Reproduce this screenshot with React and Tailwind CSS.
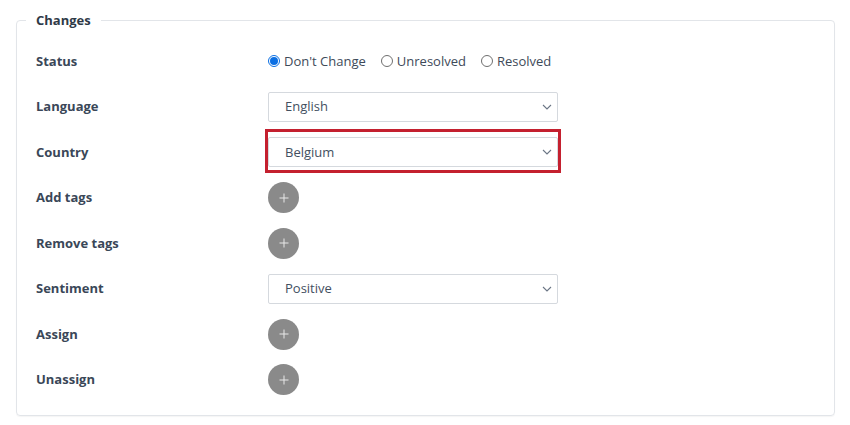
import React from "react";

const font = { fontFamily: '"Open Sans", "Noto Sans", sans-serif' };

function Chevron() {
  return (
    <svg width="10" height="6" viewBox="0 0 10 6" className="absolute right-[5px] top-1/2 -translate-y-1/2">
      <path d="M1 1 L5 5 L9 1" fill="none" stroke="#6b7685" strokeWidth="1.1" />
    </svg>
  );
}

function Select({ value }) {
  return (
    <div className="relative w-[290px] h-[30px] border border-[#d5d9de] rounded-[2px] bg-white flex items-center pl-4 text-[13px] text-[#434f5f]">
      {value}
      <Chevron />
    </div>
  );
}

function PlusBtn() {
  return (
    <div className="w-[31px] h-[31px] rounded-full bg-[#8a8a8a] flex items-center justify-center">
      <svg width="10" height="10" viewBox="0 0 10 10">
        <path d="M5 0.5 V9.5 M0.5 5 H9.5" stroke="#e8e8e8" strokeWidth="1" />
      </svg>
    </div>
  );
}

function Radio({ checked, label }) {
  return (
    <label className="flex items-center gap-[4px] text-[13px] text-[#3e4a59]">
      {checked ? (
        <span className="w-[12px] h-[12px] rounded-full border border-[#0b6fe3] flex items-center justify-center">
          <span className="w-[8px] h-[8px] rounded-full bg-[#0b6fe3]" />
        </span>
      ) : (
        <span className="w-[12px] h-[12px] rounded-full border border-[#6f6f6f]" />
      )}
      {label}
    </label>
  );
}

function Row({ label, children }) {
  return (
    <div className="flex items-center h-[45.5px]">
      <div className="w-[232px] text-[13px] font-bold text-[#3a4758]">{label}</div>
      <div className="flex items-center">{children}</div>
    </div>
  );
}

export default function App() {
  return (
    <div className="w-[850px] h-[425px] bg-white pt-[11px] pl-[16px] pr-[15px] pb-[9px]" style={font}>
      <fieldset className="h-full border border-[#e2e5e9] rounded-[4px] pl-[19px] pt-[9.5px] pb-[12px] shadow-[0_1px_1px_rgba(0,0,0,0.04)]">
        <legend className="-ml-[10px] px-[10px] text-[13px] leading-[18px] font-bold text-[#2f3a48]">Changes</legend>
        <Row label="Status">
          <div className="flex items-center gap-[15px]">
            <Radio checked label="Don't Change" />
            <Radio label="Unresolved" />
            <Radio label="Resolved" />
          </div>
        </Row>
        <Row label="Language">
          <Select value="English" />
        </Row>
        <Row label="Country">
          <div className="relative">
            <Select value="Belgium" />
            <div className="absolute left-[-3px] right-[-3px] top-[-8px] bottom-[-6px] border-[3px] border-[#c4202f] pointer-events-none" />
          </div>
        </Row>
        <Row label="Add tags">
          <PlusBtn />
        </Row>
        <Row label="Remove tags">
          <PlusBtn />
        </Row>
        <Row label="Sentiment">
          <Select value="Positive" />
        </Row>
        <Row label="Assign">
          <PlusBtn />
        </Row>
        <Row label="Unassign">
          <PlusBtn />
        </Row>
      </fieldset>
    </div>
  );
}
